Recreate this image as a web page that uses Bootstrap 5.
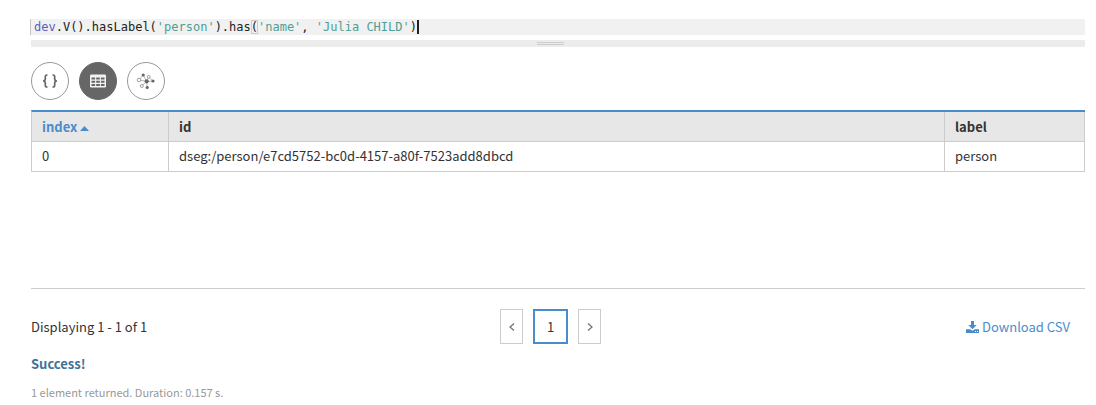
<!DOCTYPE html>
<html lang="en">
<head>
<meta charset="utf-8">
<meta name="viewport" content="width=device-width, initial-scale=1">
<title>Graph query results</title>
<link href="https://cdn.jsdelivr.net/npm/bootstrap@5.3.0/dist/css/bootstrap.min.css" rel="stylesheet">
<style>
  body { font-family: "Noto Sans CJK SC", sans-serif; font-size: 13px; line-height: 20px; color: #333; background: #fff; }
  .page { padding: 19px 11px 0 31px; }
  .editor { margin-left: -1px; padding-left: 3px; border-left: 1px solid #c4c4c4; background: #f1f1f1; font: 12px/16px "DejaVu Sans Mono", monospace; color: #222; white-space: pre; outline: 0; }
  .tok-var { color: #5d5dc0; }
  .tok-str { color: #4f9e93; }
  .bracket { box-shadow: inset 0 0 0 1px #ccc; }
  .caret { border-left: 2px solid #222; }
  .splitter { height: 7px; margin-top: 5px; padding-right: 15px; background: #ececec; }
  .grip { width: 27px; height: 3px; border: solid #ccc; border-width: 1px 0; }
  .views { gap: 10px; margin: 15px 0 10px; }
  .view-btn { width: 38px; height: 38px; border: 1px solid #999; color: #666; background: #fff; }
  .view-btn.active, .view-btn:hover { border-color: #666; background: #666; color: #fff; }
  .grid-area { height: 179px; border-bottom: 1px solid #ccc; }
  .results { table-layout: fixed; border-collapse: separate; border-spacing: 0; border-top: 2px solid #4a8ccb; border-left: 1px solid #ccc; }
  .results th, .results td { padding: 4px 10px 5px; border: solid #ccc; border-width: 0 1px 1px 0; line-height: 20px; color: #333; }
  .results th { padding: 5px 10px 4px; background: #e7e7e7; }
  .results th .sorted { color: #4a8ccb; }
  .col-index { width: 137px; }
  .col-label { width: 140px; }
  .footer-row { margin-top: 20px; padding-right: 15px; }
  .pager { gap: 10px; }
  .pager button { width: 23px; height: 35px; border: 1px solid #ccc; background: #fff; color: #777; }
  .pager button.current { width: 35px; border: 2px solid #4a8ccb; color: #333; }
  .csv { color: #4a8ccb; gap: 3px; }
  .success { margin-top: 10px; color: #3e739b; }
  .detail { margin-top: 8px; font-size: 11px; color: #999; }
</style>
</head>
<body>
<main class="page">
  <div class="editor" contenteditable="true" role="textbox" aria-label="Query" spellcheck="false"><span class="tok-var">dev</span>.V().hasLabel(<span class="tok-str">'person'</span>).has<span class="bracket">(</span><span class="tok-str">'name'</span>, <span class="tok-str">'Julia CHILD'</span>)<span class="caret"></span></div>
  <div class="splitter d-flex justify-content-center align-items-center"><div class="grip"></div></div>

  <div class="views d-flex" role="group" aria-label="Result view">
    <button type="button" class="view-btn btn rounded-circle p-0 d-flex align-items-center justify-content-center" aria-label="JSON">
      <svg width="16" height="16" viewBox="0 0 16 16" fill="none" stroke="currentColor" stroke-width="1.7"><path d="M5.5 2H5Q3.3 2 3.3 3.7V6Q3.3 7.7 1.2 8Q3.3 8.3 3.3 10V12.3Q3.3 14 5 14H5.5M10.5 2H11Q12.7 2 12.7 3.7V6Q12.7 7.7 14.8 8Q12.7 8.3 12.7 10V12.3Q12.7 14 11 14H10.5"/></svg>
    </button>
    <button type="button" class="view-btn btn active rounded-circle p-0 d-flex align-items-center justify-content-center" aria-label="Table">
      <svg width="16" height="14" viewBox="0 0 16 14"><rect width="16" height="13" y=".5" rx="1.3" fill="#f2f2f2"/><path fill="#666" d="M1.5 3.5h3.6v2H1.5zM6.2 3.5h3.6v2H6.2zM10.9 3.5h3.6v2h-3.6zM1.5 6.8h3.6v2H1.5zM6.2 6.8h3.6v2H6.2zM10.9 6.8h3.6v2h-3.6zM1.5 10h3.6v2H1.5zM6.2 10h3.6v2H6.2zM10.9 10h3.6v2h-3.6z"/></svg>
    </button>
    <button type="button" class="view-btn btn rounded-circle p-0 d-flex align-items-center justify-content-center" aria-label="Graph">
      <svg width="20" height="18" viewBox="0 0 20 18"><path d="M10.7 9.3L7.2 3M10.7 9.3L3 8M3 8L7.2 3M10.7 9.3L12.5 5M12.5 5L17 9M10.7 9.3H17M10.7 9.3L5.8 14M10.7 9.3L11.2 15.5" stroke="#999" stroke-width=".7"/><g fill="#666"><circle cx="10.7" cy="9.3" r="2.1"/><circle cx="7.2" cy="3" r="1.6"/><circle cx="17" cy="9" r="1.6"/><circle cx="11.2" cy="15.5" r="1.6"/></g><g fill="#fff" stroke="#888" stroke-width=".8"><circle cx="3" cy="8" r="1.8"/><circle cx="12.7" cy="4.8" r="1.4"/><circle cx="5.8" cy="14" r="1.5"/></g></svg>
    </button>
  </div>

  <div class="grid-area">
    <table class="results w-100">
      <colgroup><col class="col-index"><col><col class="col-label"></colgroup>
      <thead>
        <tr><th scope="col" aria-sort="ascending"><span class="sorted">index <svg width="9" height="5" viewBox="0 0 9 5" fill="currentColor" class="align-middle"><path d="M0 5L4.5 0L9 5Z"/></svg></span></th><th scope="col">id</th><th scope="col">label</th></tr>
      </thead>
      <tbody>
        <tr><td>0</td><td>dseg:/person/e7cd5752-bc0d-4157-a80f-7523add8dbcd</td><td>person</td></tr>
      </tbody>
    </table>
  </div>

  <div class="footer-row row g-0 align-items-center">
    <div class="col">Displaying 1 - 1 of 1</div>
    <nav class="pager col-auto d-flex" aria-label="Pages">
      <button type="button" class="p-0" aria-label="Previous page"><svg width="6" height="8" viewBox="0 0 6 8" fill="none" stroke="currentColor" stroke-width="1.4" class="d-block mx-auto"><path d="M5 .5L1 4L5 7.5"/></svg></button>
      <button type="button" class="current p-0" aria-current="page">1</button>
      <button type="button" class="p-0" aria-label="Next page"><svg width="6" height="8" viewBox="0 0 6 8" fill="none" stroke="currentColor" stroke-width="1.4" class="d-block mx-auto"><path d="M1 .5L5 4L1 7.5"/></svg></button>
    </nav>
    <div class="col d-flex justify-content-end">
      <a href="#" class="csv d-inline-flex align-items-center text-decoration-none"><svg width="13" height="12" viewBox="0 0 13 12" fill="currentColor"><path d="M5 0h3v4h2.7L6.5 8.2L2.3 4H5z"/><path fill-rule="evenodd" d="M0 8.3h4.2l2.3 1.5L8.8 8.3H13V12H0zM9 10h1v1H9zM11 10h1v1h-1z"/></svg>Download CSV</a>
    </div>
  </div>
  <p class="success fw-bold mb-0">Success!</p>
  <p class="detail mb-0">1 element returned. Duration: 0.157 s.</p>
</main>
<script src="https://cdn.jsdelivr.net/npm/bootstrap@5.3.0/dist/js/bootstrap.bundle.min.js"></script>
</body>
</html>
